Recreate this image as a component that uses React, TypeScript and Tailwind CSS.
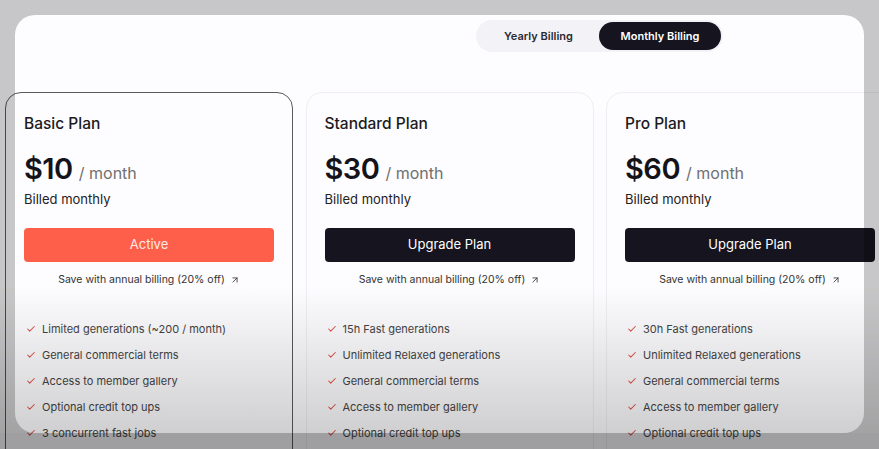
import { Check, ArrowUpRight } from "lucide-react";

type Plan = {
  name: string;
  price: string;
  active?: boolean;
  features: string[];
};

const plans: Plan[] = [
  {
    name: "Basic Plan",
    price: "$10",
    active: true,
    features: [
      "Limited generations (~200 / month)",
      "General commercial terms",
      "Access to member gallery",
      "Optional credit top ups",
      "3 concurrent fast jobs",
    ],
  },
  {
    name: "Standard Plan",
    price: "$30",
    features: [
      "15h Fast generations",
      "Unlimited Relaxed generations",
      "General commercial terms",
      "Access to member gallery",
      "Optional credit top ups",
    ],
  },
  {
    name: "Pro Plan",
    price: "$60",
    features: [
      "30h Fast generations",
      "Unlimited Relaxed generations",
      "General commercial terms",
      "Access to member gallery",
      "Optional credit top ups",
    ],
  },
];

function PlanCard({ plan }: { plan: Plan }) {
  return (
    <div
      className={`w-[288px] shrink-0 h-[420px] rounded-[16px] border px-[18px] pt-[19px] bg-[#fdfcfe] ${
        plan.active ? "border-[#5a5a5a]" : "border-[#efeef2]"
      }`}
    >
      <h3 className="text-[15.5px] leading-6 font-medium text-[#1b1a22]">{plan.name}</h3>
      <div className="mt-[15px] flex items-baseline gap-[6px] h-9">
        <span className="text-[29px] leading-9 font-semibold tracking-[-0.5px] text-[#14131a]">{plan.price}</span>
        <span className="text-[16px] text-[#707070]">/ month</span>
      </div>
      <p className="mt-[2px] text-[13px] leading-5 text-[#222]">Billed monthly</p>
      <button
        className={`mt-[19px] w-full h-[34px] rounded-[4px] text-[13px] ${
          plan.active ? "bg-[#fe5f4b] text-[#ffe9e4]" : "bg-[#15141f] text-white"
        }`}
      >
        {plan.active ? "Active" : "Upgrade Plan"}
      </button>
      <p className="mt-[10px] flex items-center justify-center gap-[5px] text-[10.5px] leading-4 text-[#333]">
        Save with annual billing (20% off)
        <ArrowUpRight size={10} strokeWidth={2} />
      </p>
      <ul className="mt-[33px] flex flex-col gap-[10px]">
        {plan.features.map((f) => (
          <li key={f} className="flex items-center gap-[6px] text-[11px] leading-4 text-[#444]">
            <Check size={10} strokeWidth={2.5} color="#e0524a" className="ml-[2px] shrink-0" />
            {f}
          </li>
        ))}
      </ul>
    </div>
  );
}

export default function App() {
  return (
    <div
      className="relative w-[879px] h-[449px] overflow-hidden bg-[#fdfcfe]"
      style={{ fontFamily: "Inter, 'Noto Sans', sans-serif" }}
    >
      {/* Billing toggle */}
      <div className="pt-[20px] pl-[476px]">
        <div className="inline-flex items-center h-[32px] w-[247px] rounded-full bg-[#f3f2f7] p-[2px]">
          <span className="flex-1 text-center text-[11px] font-semibold text-[#2a2a33]">Yearly Billing</span>
          <span className="h-[28px] w-[122px] rounded-full bg-[#15141f] text-white text-[11px] font-semibold flex items-center justify-center">
            Monthly Billing
          </span>
        </div>
      </div>

      {/* Plan cards */}
      <div className="mt-[40px] pl-[5px] flex gap-[12.5px]">
        {plans.map((p) => (
          <PlanCard key={p.name} plan={p} />
        ))}
      </div>

      {/* Lower fade */}
      <div className="pointer-events-none absolute left-0 right-0 top-[285px] h-[148px] bg-gradient-to-b from-transparent to-[rgba(0,0,0,0.18)]" />
      {/* Spotlight around the panel */}
      <div className="pointer-events-none absolute left-[15px] top-[15px] w-[849px] h-[418px] rounded-[20px] shadow-[0_0_0_1000px_rgba(0,0,0,0.21)]" />
      {/* Bottom bar */}
      <div className="pointer-events-none absolute left-0 right-0 top-[433px] bottom-0 bg-[rgba(0,0,0,0.2)]" />
    </div>
  );
}
